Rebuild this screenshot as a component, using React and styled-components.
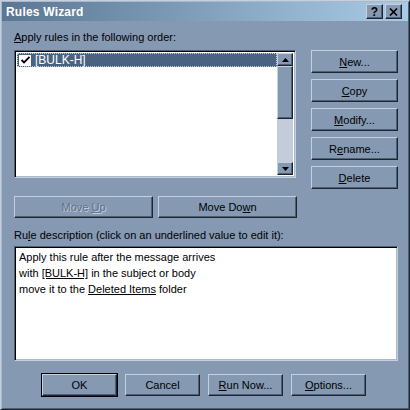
import styled, { createGlobalStyle } from 'styled-components'

const Global = createGlobalStyle`
    body {
        margin: 0;
        background: #8599b3;
    }
    * {
        box-sizing: border-box;
    }
`
const Window = styled.div`
    width: 410px;
    height: 410px;
    background: #8599b3;
    border-left: 1px solid #c5d0de;
    border-top: 1px solid #c5d0de;
    border-right: 1px solid #1d2630;
    border-bottom: 1px solid #1d2630;
    box-shadow: inset 1px 1px 0 #a9b8cb, inset -1px -1px 0 #4f6075;
    font-family: 'Liberation Sans', Arial, sans-serif;
    font-size: 11px;
    color: #000;
    display: flex;
    flex-direction: column;
`
const TitleBar = styled.div`
    margin: 1px 1px 0 1px;
    height: 19px;
    padding: 0 6px 0 4px;
    display: flex;
    align-items: center;
    justify-content: space-between;
    background: linear-gradient(to right, #5b7692, #a9cbe6);
`
const Title = styled.span`
    color: #fff;
    font-weight: bold;
    font-size: 12px;
    letter-spacing: 0.2px;
`
const TitleButtons = styled.div`
    display: flex;
    gap: 2px;
`
const CaptionButton = styled.div`
    width: 17px;
    height: 15px;
    background: #8599b3;
    border-top: 1px solid #c5d0de;
    border-left: 1px solid #c5d0de;
    border-right: 1px solid #1d2630;
    border-bottom: 1px solid #1d2630;
    box-shadow: inset -1px -1px 0 #4f6075;
    display: flex;
    align-items: center;
    justify-content: center;
    font-weight: bold;
    font-size: 12px;
    line-height: 1;
`
const Body = styled.div`
    padding: 10px 11px 0 13px;
    display: flex;
    flex-direction: column;
`
const Label = styled.div`
    line-height: 13px;
    margin-top: ${(p) => p.mt || 0}px;
`
const TopSection = styled.div`
    display: flex;
    align-items: flex-start;
    gap: 15px;
    margin-top: 6px;
`
const Sunken = styled.div`
    background: #fff;
    border-top: 1px solid #4f6075;
    border-left: 1px solid #4f6075;
    border-right: 1px solid #c5d0de;
    border-bottom: 1px solid #c5d0de;
    box-shadow: inset 1px 1px 0 #000, inset -1px -1px 0 #a9b8cb;
    padding: 2px;
`
const ListBox = styled(Sunken)`
    width: 283px;
    height: 128px;
    display: flex;
`
const ListItems = styled.div`
    flex: 1;
    overflow: hidden;
`
const Row = styled.div`
    height: 14px;
    display: flex;
    align-items: center;
    gap: 3px;
    background: ${(p) => (p.selected ? '#4a6380' : 'transparent')};
    color: ${(p) => (p.selected ? '#fff' : '#000')};
    outline: ${(p) => (p.selected ? '1px dotted #c5d0de' : 'none')};
    outline-offset: -1px;
    padding-left: 1px;
    font-size: 12px;
`
const Check = styled.div`
    width: 14px;
    height: 13px;
    background: #fff;
    border: 1px solid #4f6075;
    display: flex;
    align-items: center;
    justify-content: center;
`
const ScrollBar = styled.div`
    width: 16px;
    display: flex;
    flex-direction: column;
    background: #c4cbdb;
`
const ScrollButton = styled.div`
    height: ${(p) => p.h || 13}px;
    background: #8599b3;
    border-top: 1px solid #c5d0de;
    border-left: 1px solid #c5d0de;
    border-right: 1px solid #1d2630;
    border-bottom: 1px solid #1d2630;
    box-shadow: inset -1px -1px 0 #4f6075;
    display: flex;
    align-items: center;
    justify-content: center;
`
const Track = styled.div`
    flex: 1;
`
const SideButtons = styled.div`
    display: flex;
    flex-direction: column;
    gap: 6px;
`
const Button = styled.button`
    width: ${(p) => p.w || 75}px;
    height: ${(p) => p.h || 23}px;
    padding: 0;
    background: #8599b3;
    font-family: 'Liberation Sans', Arial, sans-serif;
    font-size: 11px;
    color: #000;
    border-top: 1px solid #c5d0de;
    border-left: 1px solid #c5d0de;
    border-right: 1px solid #1d2630;
    border-bottom: 1px solid #1d2630;
    box-shadow: inset -1px -1px 0 #4f6075;
    outline: ${(p) => (p.primary ? '1px solid #000' : 'none')};

    &:disabled {
        color: #5f7088;
        text-shadow: 1px 1px 0 #c5d0de;
    }
`
const MoveRow = styled.div`
    display: flex;
    gap: 5px;
    margin-top: 7px;
`
const DescBox = styled(Sunken)`
    width: 384px;
    height: 115px;
    margin-top: 4px;
    padding: 2px 4px;
    font-size: 11px;
    line-height: 16px;
`
const Link = styled.span`
    text-decoration: underline;
`
const Footer = styled.div`
    display: flex;
    gap: 8px;
    padding-left: 28px;
    margin-top: 13px;
`

function App() {
    return (
        <Window>
            <Global />
            <TitleBar>
                <Title>Rules Wizard</Title>
                <TitleButtons>
                    <CaptionButton>?</CaptionButton>
                    <CaptionButton>
                        <svg width="9" height="8" viewBox="0 0 9 8">
                            <path d="M1 0.5 L8 7.5 M8 0.5 L1 7.5" stroke="#000" strokeWidth="1.6" />
                        </svg>
                    </CaptionButton>
                </TitleButtons>
            </TitleBar>
            <Body>
                <Label>
                    <u>A</u>pply rules in the following order:
                </Label>
                <TopSection>
                    <ListBox>
                        <ListItems>
                            <Row selected>
                                <Check>
                                    <svg width="9" height="8" viewBox="0 0 9 8">
                                        <path d="M0.5 4 L3 6.5 L8.5 1" stroke="#000" strokeWidth="1.8" fill="none" />
                                    </svg>
                                </Check>
                                <span>[BULK-H]</span>
                            </Row>
                        </ListItems>
                        <ScrollBar>
                            <ScrollButton>
                                <svg width="7" height="4" viewBox="0 0 7 4">
                                    <path d="M3.5 0 L7 4 L0 4 Z" fill="#000" />
                                </svg>
                            </ScrollButton>
                            <ScrollButton h={53} />
                            <Track />
                            <ScrollButton>
                                <svg width="7" height="4" viewBox="0 0 7 4">
                                    <path d="M0 0 L7 0 L3.5 4 Z" fill="#000" />
                                </svg>
                            </ScrollButton>
                        </ScrollBar>
                    </ListBox>
                    <SideButtons>
                        <Button w={87}>
                            <u>N</u>ew...
                        </Button>
                        <Button w={87}>
                            <u>C</u>opy
                        </Button>
                        <Button w={87}>
                            <u>M</u>odify...
                        </Button>
                        <Button w={87}>
                            R<u>e</u>name...
                        </Button>
                        <Button w={87}>
                            <u>D</u>elete
                        </Button>
                    </SideButtons>
                </TopSection>
                <MoveRow>
                    <Button w={139} h={22} disabled>
                        Move <u>U</u>p
                    </Button>
                    <Button w={139} h={22}>
                        Move Do<u>w</u>n
                    </Button>
                </MoveRow>
                <Label mt={11}>
                    Ru<u>l</u>e description (click on an underlined value to edit it):
                </Label>
                <DescBox>
                    <div>Apply this rule after the message arrives</div>
                    <div>
                        with <Link>[BULK-H]</Link> in the subject or body
                    </div>
                    <div>
                        move it to the <Link>Deleted Items</Link> folder
                    </div>
                </DescBox>
                <Footer>
                    <Button h={22} primary>
                        OK
                    </Button>
                    <Button h={22}>Cancel</Button>
                    <Button h={22}>
                        <u>R</u>un Now...
                    </Button>
                    <Button h={22}>
                        <u>O</u>ptions...
                    </Button>
                </Footer>
            </Body>
        </Window>
    )
}

export default App
